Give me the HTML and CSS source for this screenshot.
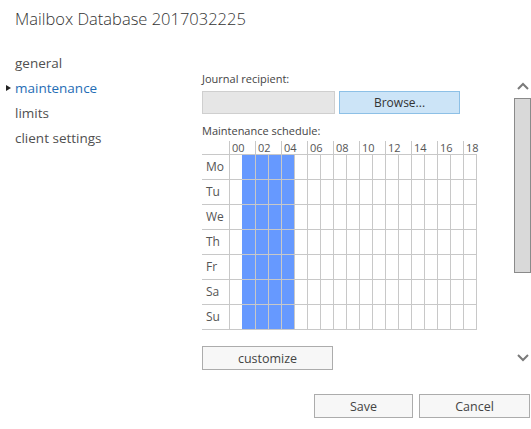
FILE: index.html
```html
<!DOCTYPE html>
<html>
<head>
<meta charset="utf-8">
<link rel="stylesheet" href="styles.css">
</head>
<body>
<div class="page">
  <div class="title">Mailbox Database 2017032225</div>
  <div class="main">
    <ul class="nav">
      <li class="nav-item">general</li>
      <li class="nav-item active"><span class="marker"></span>maintenance</li>
      <li class="nav-item">limits</li>
      <li class="nav-item">client settings</li>
    </ul>
    <div class="content">
      <div class="label">Journal recipient:</div>
      <div class="journal-row">
        <div class="input"></div>
        <div class="btn btn-browse">Browse...</div>
      </div>
      <div class="label label-sched">Maintenance schedule:</div>
      <div class="schedule">
        <div class="sched-head">
          <div class="day-spacer"></div>
          <div class="hcell">00</div><div class="hcell">02</div><div class="hcell">04</div><div class="hcell">06</div>
          <div class="hcell">08</div><div class="hcell">10</div><div class="hcell">12</div><div class="hcell">14</div>
          <div class="hcell">16</div><div class="hcell hcell-last">18</div>
        </div>
        <div class="sched-body" id="body"></div>
      </div>
      <div class="btn btn-customize">customize</div>
    </div>
    <div class="scrollbar">
      <svg class="arrow arrow-up" width="12" height="8" viewBox="0 0 12 8"><path d="M1 7 L6 2 L11 7" fill="none" stroke="#7a7a7a" stroke-width="2"/></svg>
      <div class="thumb"></div>
      <div class="track-rest"></div>
      <svg class="arrow arrow-down" width="12" height="8" viewBox="0 0 12 8"><path d="M1 1 L6 6 L11 1" fill="none" stroke="#7a7a7a" stroke-width="2"/></svg>
    </div>
  </div>
  <div class="footer">
    <div class="btn btn-save">Save</div>
    <div class="btn btn-cancel">Cancel</div>
  </div>
</div>
<script>
  var days = ["Mo","Tu","We","Th","Fr","Sa","Su"];
  var body = document.getElementById("body");
  days.forEach(function (d) {
    var row = document.createElement("div");
    row.className = "row";
    var lab = document.createElement("div");
    lab.className = "day";
    lab.textContent = d;
    row.appendChild(lab);
    for (var h = 0; h < 24; h++) {
      var c = document.createElement("div");
      c.className = "cell" + (h >= 1 && h <= 4 ? " on" : "") + (h === 1 ? " first" : "");
      row.appendChild(c);
    }
    body.appendChild(row);
  });
</script>
</body>
</html>
```

FILE: styles.css
```css
* { box-sizing: border-box; }
html, body { margin: 0; padding: 0; background: #fff; }
body { font-family: "Open Sans", "Noto Sans", sans-serif; color: #444; }

.page { width: 531px; height: 429px; display: flex; flex-direction: column; overflow: hidden; }

.title { padding: 6px 0 0 15px; font-size: 16.5px; font-weight: 300; line-height: 26px; color: #333; height: 51px; }

.main { display: flex; flex: 1; min-height: 0; }

.nav { list-style: none; margin: 0; padding: 0; width: 202px; flex: none; }
.nav-item { position: relative; padding-left: 15px; font-size: 13.5px; line-height: 25px; color: #505050; }
.nav-item.active { color: #1f6db5; }
.marker { position: absolute; left: 6px; top: 9px; width: 0; height: 0; border-top: 3.5px solid transparent; border-bottom: 3.5px solid transparent; border-left: 5px solid #222; }

.content { flex: none; width: 312px; padding-top: 20px; display: flex; flex-direction: column; align-items: flex-start; }

.label { font-size: 11px; line-height: 15px; color: #444; }
.journal-row { display: flex; gap: 4px; margin-top: 5px; }
.input { width: 133px; height: 23px; background: #e6e6e6; border: 1px solid #cfcfcf; }
.btn { display: flex; align-items: center; justify-content: center; font-size: 12px; color: #444; background: #f7f7f7; border: 1px solid #acacac; }
.btn-browse { width: 121px; height: 23px; background: #cce4f7; border-color: #8dc0e6; color: #333; }
.label-sched { margin-top: 9px; }

.schedule { margin-top: 3px; width: 275px; }
.sched-head { display: flex; width: 275px; height: 14px; border-bottom: 1px solid #c8c8c8; white-space: nowrap; }
.day-spacer { width: 27px; flex: none; }
.hcell { width: 26px; flex: none; border-left: 1px solid #c8c8c8; padding-left: 2px; font-size: 11px; line-height: 13px; color: #555; }
.hcell-last { width: 16px; }
.row { display: flex; width: 275px; overflow: hidden; height: 25px; border-bottom: 1px solid #c8c8c8; }
.day { width: 27px; flex: none; padding-left: 4px; font-size: 12px; line-height: 24px; color: #555; }
.cell { width: 13px; flex: none; border-left: 1px solid #c8c8c8; }
.cell.on { background: #6699ff; }
.cell.first { border-left-color: #6699ff; }

.btn-customize { margin-top: 16px; width: 131px; height: 24px; font-size: 12.5px; }

.scrollbar { flex: none; width: 17px; margin-left: auto; display: flex; flex-direction: column; align-items: center; padding-top: 31px; }
.arrow { display: block; flex: none; }
.thumb { width: 17px; height: 175px; margin-top: 8px; background: #d9d9d9; border: 1px solid #8a8a8a; flex: none; }
.track-rest { height: 80px; flex: none; }
.arrow-down { margin-top: 1px; }

.footer { display: flex; justify-content: flex-end; gap: 6px; padding: 0 1px 11px 0; }
.btn-save { width: 99px; height: 24px; font-size: 12.5px; }
.btn-cancel { width: 111px; height: 24px; font-size: 12.5px; }
```
